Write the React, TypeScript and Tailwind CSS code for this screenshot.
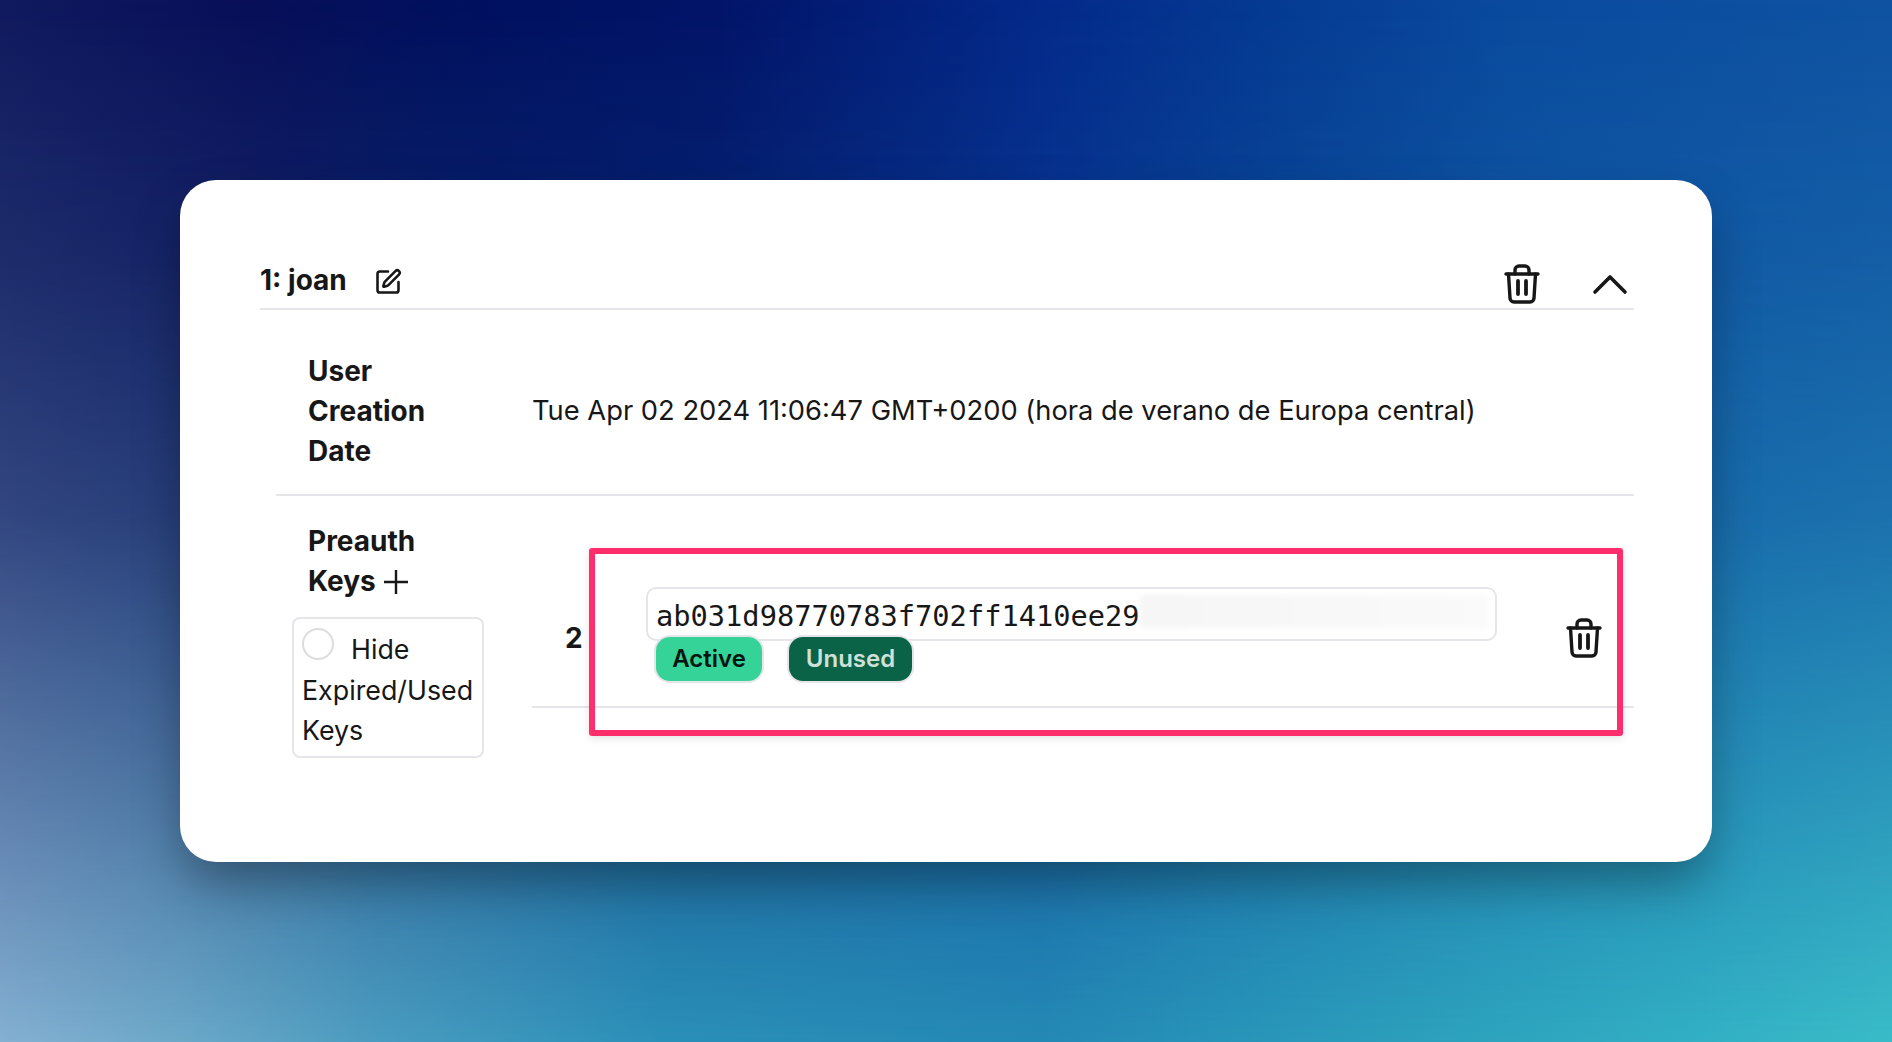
import React from "react";
import { SquarePen } from "lucide-react";

function TrashIcon() {
  return (
    <svg width="36" height="40" viewBox="0 0 36 40" fill="none" stroke="#171717" strokeWidth="3.4" strokeLinecap="round" strokeLinejoin="round">
      <path d="M2 10H34" />
      <path d="M11 10V6a4 4 0 0 1 4-4h6a4 4 0 0 1 4 4v4" />
      <path d="M4.5 10L6 34a4 4 0 0 0 4 4h16a4 4 0 0 0 4-4L31.500 10" />
      <path d="M14 17V30" strokeWidth="3.8" />
      <path d="M22 17V30" strokeWidth="3.8" />
    </svg>
  );
}

export default function App() {
  return (
    <div className="relative h-screen w-full overflow-hidden flex items-center justify-center font-['Inter',sans-serif] text-[28px] leading-[40px] text-[#171717] bg-[linear-gradient(90deg,#101a5e_0%,#080f58_13%,#00105f_25%,#021468_38%,#04298a_55%,#053a92_67%,#0a4a9e_80%,#0f52a2_100%)] before:absolute before:inset-0 before:bg-[linear-gradient(90deg,#84b0d2_0%,#6aa8c8_10%,#4a9cc0_20%,#2a90b8_35%,#2489b5_55%,#2ca0bc_75%,#32b0c4_90%,#3abcc8_100%)] before:[mask-image:linear-gradient(to_bottom,rgba(0,0,0,0)_0%,rgba(0,0,0,0.12)_25%,rgba(0,0,0,0.3)_50%,rgba(0,0,0,0.65)_75%,rgba(0,0,0,1)_100%)]">
      <div className="relative w-[1532px] h-[682px] bg-white rounded-[36px] pt-[60px] pl-[80px] pr-[78px] shadow-[0_25px_50px_-5px_rgba(0,0,0,0.35)]">
        {/* header */}
        <div className="flex items-center h-[70px] border-b-2 border-[#e5e5ea] pt-[12px]">
          <span className="font-bold">1: joan</span>
          <SquarePen size={28} strokeWidth={2.2} className="ml-[27px] mt-[3px]" />
          <div className="ml-auto flex items-center mt-[8px]">
            <TrashIcon />
            <svg width="36" height="22" viewBox="0 0 36 22" fill="none" stroke="#171717" strokeWidth="3.6" strokeLinecap="round" strokeLinejoin="round" className="ml-[52px] mr-[6px]">
              <path d="M3 19L18 4L33 19" />
            </svg>
          </div>
        </div>

        {/* creation date row */}
        <div className="ml-[16px] flex items-center pt-[41px] pb-[23px] pl-[32px] border-b-2 border-[#e5e5ea]">
          <div className="w-[224px] font-bold">
            User
            <br />
            Creation
            <br />
            Date
          </div>
          <div className="text-[27.3px]">Tue Apr 02 2024 11:06:47 GMT+0200 (hora de verano de Europa central)</div>
        </div>

        {/* preauth keys row */}
        <div className="ml-[16px] flex">
          <div className="w-[256px] pt-[25px] pl-[16px]">
            <div className="pl-[16px] font-bold">
              Preauth
              <br />
              <span className="inline-flex items-center">
                Keys
                <svg width="24" height="24" viewBox="0 0 24 24" fill="none" stroke="#171717" strokeWidth="2.4" className="ml-[8px] mt-[2px]">
                  <path d="M12 0V24M0 12H24" />
                </svg>
              </span>
            </div>
            <div className="mt-[16px] w-[192px] h-[141px] border-2 border-[#e5e5ea] rounded-[8px] px-[8px] pt-[9px] text-[26.8px]">
              <div className="flex">
                <span className="w-[32px] h-[32px] rounded-full border-2 border-[#dcdcdc] shrink-0" />
                <span className="ml-[17px] mt-[1px]">Hide</span>
              </div>
              <div className="mt-[1px]">Expired/Used</div>
              <div>Keys</div>
            </div>
          </div>
          <div className="flex-1 mt-[74px]">
            <div className="flex items-center h-[138px] border-b-2 border-[#e5e5ea]">
              <span className="w-[114px] pl-[33px] font-bold">2</span>
              <div className="w-[851px] -mt-[8px]">
                <div className="flex items-center h-[54px] border-2 border-[#e5e5ea] rounded-[10px] pl-[8px] pr-[7px] font-['DejaVu_Sans_Mono',monospace] text-[28.7px]">
                  <span className="mt-[3px]">ab031d98770783f702ff1410ee29</span>
                  <span className="flex-1 h-[33px] mb-[5px] bg-linear-to-r from-[#f6f6f7] to-[#fafafb] blur-[2px]" />
                </div>
                <div className="flex gap-[27px] pl-[10px] -mt-[4px] text-[24px] font-semibold">
                  <span className="flex items-center justify-center w-[106px] h-[44px] rounded-[14px] bg-[#36d399] text-[#04140e] shadow-[0_0_0_2px_#e5e5ea]">Active</span>
                  <span className="flex items-center justify-center w-[123px] h-[44px] rounded-[14px] bg-[#0a6247] text-[#cfe0d9] shadow-[0_0_0_2px_#e5e5ea]">Unused</span>
                </div>
              </div>
              <div className="ml-[69px]">
                <TrashIcon />
              </div>
            </div>
          </div>
        </div>

        {/* highlight box drawn over the key row */}
        <div className="absolute left-[409px] top-[368px] w-[1034px] h-[188px] border-[6px] border-[#ff2d6b] rounded-[3px] shadow-[0_2px_8px_rgba(0,0,0,0.12)]" />
      </div>
    </div>
  );
}
